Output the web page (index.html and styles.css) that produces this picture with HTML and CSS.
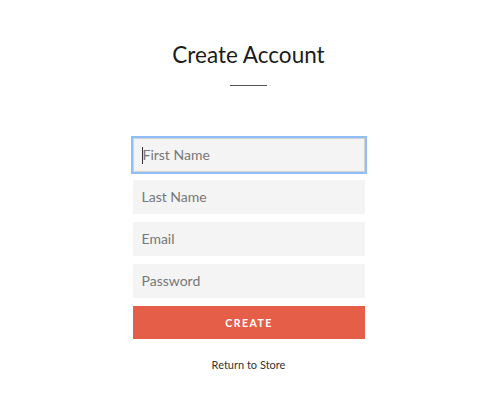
FILE: index.html
```html
<!DOCTYPE html>
<html>
<head>
<meta charset="utf-8">
<link rel="stylesheet" href="styles.css">
</head>
<body>
<div class="page">
  <div class="form-wrap">
    <h1 class="title">Create Account</h1>
    <div class="divider"></div>
    <form class="form">
      <div class="field focused"><span class="caret"></span><span class="ph">First Name</span></div>
      <div class="field"><span class="ph">Last Name</span></div>
      <div class="field"><span class="ph">Email</span></div>
      <div class="field"><span class="ph">Password</span></div>
      <div class="btn">CREATE</div>
    </form>
    <a class="return">Return to Store</a>
  </div>
</div>
</body>
</html>
```
FILE: styles.css
```css
html, body {
  margin: 0;
  padding: 0;
  background: #fff;
}
body {
  font-family: Lato, "Noto Sans", sans-serif;
  color: #222;
}
.page {
  display: flex;
  justify-content: center;
  padding-left: 17px;
}
.form-wrap {
  width: 232px;
  display: flex;
  flex-direction: column;
  align-items: center;
}
.title {
  margin: 40px 0 0 0;
  font-size: 22.5px;
  font-weight: 400;
  line-height: 30px;
  color: #1c1c1c;
  white-space: nowrap;
}
.divider {
  width: 37px;
  height: 1px;
  background: #555;
  margin-top: 15px;
}
.form {
  margin-top: 52px;
  width: 232px;
  display: flex;
  flex-direction: column;
  gap: 8px;
}
.field {
  height: 34px;
  box-sizing: border-box;
  background: #f4f4f4;
  display: flex;
  align-items: center;
  padding-left: 9px;
  font-size: 14px;
  color: #777;
  position: relative;
}
.field.focused {
  border: 1px solid #d2d2d2;
  outline: 2px solid #8ebff7;
  outline-offset: 0;
  padding-left: 8px;
}
.caret {
  width: 1px;
  height: 17px;
  background: #333;
}
.ph {
  line-height: 18px;
}
.btn {
  height: 33px;
  background: #e55f48;
  color: #fff;
  font-size: 10.5px;
  font-weight: 700;
  letter-spacing: 1.5px;
  display: flex;
  align-items: center;
  justify-content: center;
  padding-left: 1px;
}
.return {
  margin-top: 19px;
  font-size: 11px;
  color: #333;
}
```
